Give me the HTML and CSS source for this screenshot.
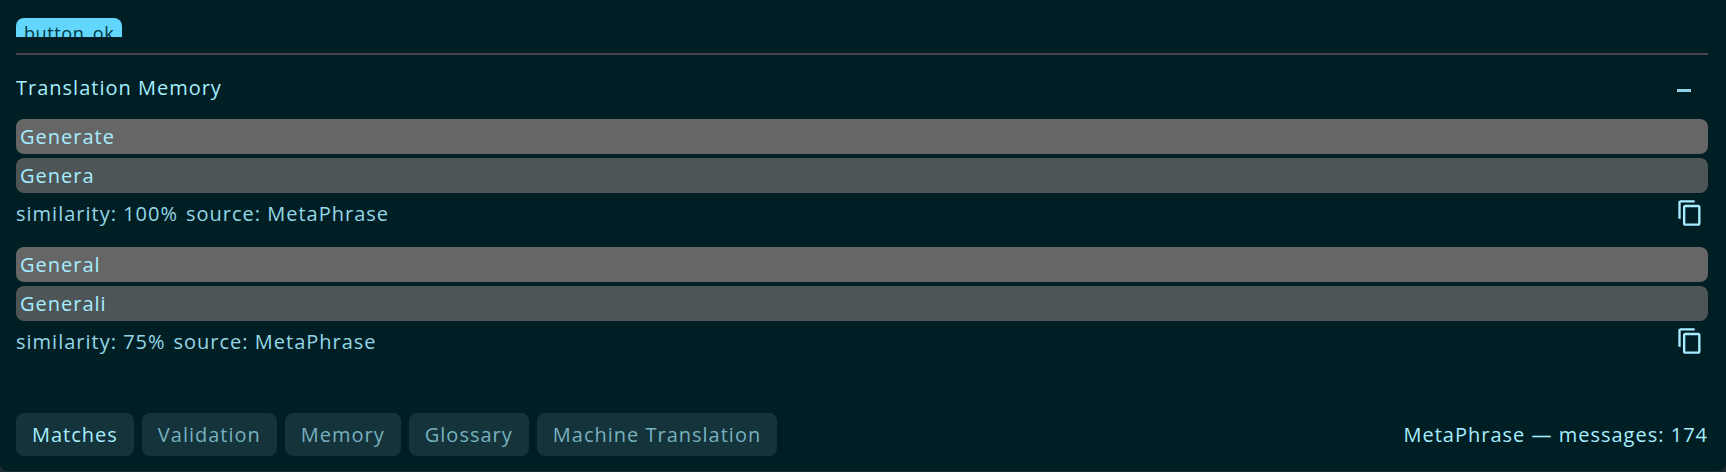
FILE: index.html
```html
<!DOCTYPE html>
<html lang="en">
<head>
<meta charset="utf-8">
<title>MetaPhrase</title>
<link rel="stylesheet" href="styles.css">
</head>
<body>
<div class="window">
  <div class="terms"><span class="term">button_ok</span></div>
  <section class="memory">
    <header class="head"><h2 class="title">Translation Memory</h2><span class="collapse"></span></header>
    <article class="match">
      <div class="bar source">Generate</div>
      <div class="bar target">Genera</div>
      <div class="meta"><span>similarity: 100%</span><span>source: MetaPhrase</span>
        <svg class="copy" viewBox="0 0 24 24"><path d="M16 1H4c-1.1 0-2 .9-2 2v14h2V3h12V1zm3 4H8c-1.1 0-2 .9-2 2v14c0 1.1.9 2 2 2h11c1.1 0 2-.9 2-2V7c0-1.1-.9-2-2-2zm0 16H8V7h11v14z"/></svg></div>
    </article>
    <article class="match">
      <div class="bar source">General</div>
      <div class="bar target">Generali</div>
      <div class="meta"><span>similarity: 75%</span><span>source: MetaPhrase</span>
        <svg class="copy" viewBox="0 0 24 24"><path d="M16 1H4c-1.1 0-2 .9-2 2v14h2V3h12V1zm3 4H8c-1.1 0-2 .9-2 2v14c0 1.1.9 2 2 2h11c1.1 0 2-.9 2-2V7c0-1.1-.9-2-2-2zm0 16H8V7h11v14z"/></svg></div>
    </article>
  </section>
  <footer class="footer">
    <nav class="tabs">
      <button class="tab active">Matches</button>
      <button class="tab">Validation</button>
      <button class="tab">Memory</button>
      <button class="tab">Glossary</button>
      <button class="tab">Machine Translation</button>
    </nav>
    <span class="status">MetaPhrase — messages: 174</span>
  </footer>
</div>
</body>
</html>
```
FILE: styles.css
```css
* { box-sizing: border-box; }
body {
  margin: 0;
  background: #1c2b2f;
  color: #a6eeff;
  font: 20px/32px "Open Sans", "Noto Sans", sans-serif;
  letter-spacing: 1px;
}
.window {
  display: flex;
  flex-direction: column;
  height: 471px;
  padding: 18px 18px 15px 16px;
  background: #001f25;
  border-radius: 0 0 8px 8px;
}
.terms {
  height: 19px;
  overflow: hidden;
}
.term {
  display: block;
  width: 106px;
  height: 35px;
  padding-left: 8px;
  border-radius: 8px;
  background: #62d6fc;
  color: #003640;
  font-size: 18px;
  line-height: 31px;
  letter-spacing: 0.6px;
}
.memory {
  margin-top: 16px;
  border-top: 2px solid #49454f;
}
.head {
  display: flex;
  justify-content: space-between;
  height: 64px;
  padding: 17px 17px 0 0;
}
.title {
  margin: 0;
  font-size: 20px;
  font-weight: 400;
}
.collapse {
  width: 14px;
  height: 3px;
  margin-top: 17px;
  background: #8bd3e3;
}
.match { height: 128px; }
.bar {
  height: 35px;
  margin-bottom: 4px;
  padding-left: 4px;
  border-radius: 8px;
  line-height: 36px;
}
.source { background: #666; }
.target { background: #4d5557; }
.meta {
  display: flex;
  gap: 8px;
  height: 32px;
  padding-right: 4px;
  color: #95d7e6;
  line-height: 34px;
}
.copy {
  width: 28px;
  height: 28px;
  margin: 2px 0 0 auto;
  fill: #a6eeff;
}
.footer {
  display: flex;
  justify-content: space-between;
  align-items: center;
  margin-top: auto;
}
.tabs {
  display: flex;
  gap: 8px;
}
.tab {
  height: 43px;
  padding: 0 16px;
  border: 0;
  border-radius: 8px;
  background: #14333a;
  color: #77b0bf;
  font: inherit;
  letter-spacing: inherit;
}
.active { color: #a6eeff; }
```
